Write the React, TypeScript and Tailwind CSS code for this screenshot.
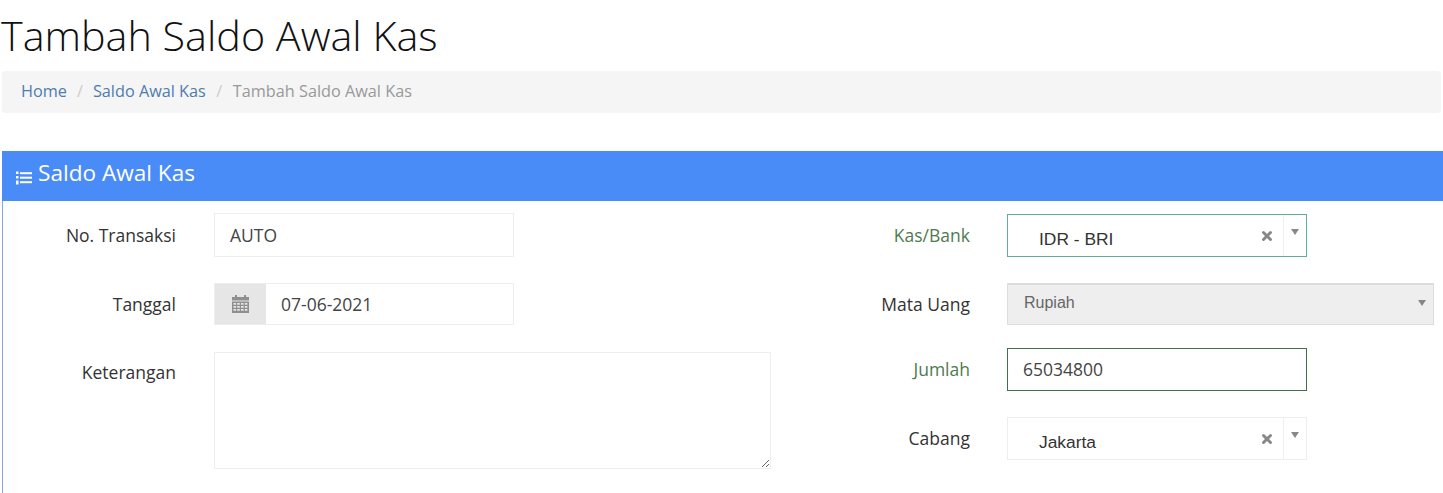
import { X } from "lucide-react";

function ListIcon() {
  return (
    <svg width="16" height="14" viewBox="0 0 16 14" className="mt-[9px] shrink-0" fill="currentColor">
      <rect x="0" y="0.5" width="2.5" height="2.5" />
      <rect x="0" y="5" width="2.5" height="2.5" />
      <rect x="0" y="9.5" width="2.5" height="2.5" />
      <rect x="0" y="12" width="2.5" height="1.5" />
      <rect x="4" y="1.2" width="12" height="2" />
      <rect x="4" y="5.7" width="12" height="2" />
      <rect x="4" y="10.2" width="12" height="2" />
    </svg>
  );
}

function CalendarIcon() {
  return (
    <svg width="17" height="18" viewBox="0 0 17 18" fill="#8f8f8f">
      <rect x="3" y="0" width="2" height="3" />
      <rect x="12" y="0" width="2" height="3" />
      <rect x="0" y="2" width="17" height="3.5" />
      <path d="M0 6.5h17V18H0z M1.5 8v1.8h2.6V8z M5.2 8v1.8h2.6V8z M9 8v1.8h2.6V8z M12.8 8v1.8h2.6V8z M1.5 11v1.8h2.6V11z M5.2 11v1.8h2.6V11z M9 11v1.8h2.6V11z M12.8 11v1.8h2.6V11z M1.5 14v1.8h2.6V14z M5.2 14v1.8h2.6V14z M9 14v1.8h2.6V14z M12.8 14v1.8h2.6V14z" fillRule="evenodd" />
    </svg>
  );
}

function Caret() {
  return <span className="block h-0 w-0 border-x-[4px] border-t-[6px] border-x-transparent border-t-[#888888]" />;
}

function Select2({ value, focused }: { value: string; focused?: boolean }) {
  return (
    <div className={`flex h-[43px] w-[300px] border ${focused ? "border-[#5fae9c]" : "border-[#eeeeee]"}`}>
      <span className="flex-1 pl-[31px] pt-[12px] font-['Liberation_Sans',sans-serif] text-[17.4px] leading-[24px] text-[#333333]">
        {value}
      </span>
      <span className="flex w-[24px] items-center justify-start pl-[1px]">
        <X size={14} strokeWidth={5} className="text-[#888888]" />
      </span>
      <span className="flex w-[23px] justify-center border-l border-[#eeeeee] pt-[14px]">
        <Caret />
      </span>
    </div>
  );
}

function Label({ children, success }: { children: string; success?: boolean }) {
  return (
    <label className={`text-right text-[17.5px] ${success ? "text-[#4f7a4f]" : "text-[#333333]"}`}>{children}</label>
  );
}

export default function App() {
  return (
    <div className="flex h-[493px] flex-col overflow-hidden bg-white font-['Open_Sans',sans-serif]">
      <h1 className="pl-[1px] pt-[8px] text-[41.3px] font-light leading-[54px] text-[#111111]">Tambah Saldo Awal Kas</h1>

      <div className="mx-[2px] mt-[9px] flex h-[42px] items-center rounded-sm bg-[#f5f5f5] pb-[2px] pl-[19px] text-[16.25px] text-[#999999]">
        <span className="text-[#4f7cae]">Home</span>
        <span className="mx-[10px] text-[#cccccc]">/</span>
        <span className="text-[#4f7cae]">Saldo Awal Kas</span>
        <span className="mx-[10.5px] text-[#cccccc]">/</span>
        <span>Tambah Saldo Awal Kas</span>
      </div>

      <section className="ml-[2px] mt-[38px] flex-1 border-l border-[#7fa8e0]">
        <div className="-ml-px flex h-[50px] items-center gap-[6px] bg-[#4a8cf7] pb-[6px] pl-[14px] text-[22.6px] text-white">
          <ListIcon />
          Saldo Awal Kas
        </div>

        <div className="flex pt-[12px]">
          <div className="flex w-[857px] flex-col">
            <div className="grid grid-cols-[173px_300px] items-center gap-x-[38px]">
              <Label>No. Transaksi</Label>
              <div className="flex h-[44px] items-center border border-[#eeeeee] px-[15px] text-[17.5px] text-[#444444]">AUTO</div>
            </div>
            <div className="mt-[26px] grid grid-cols-[173px_300px] items-center gap-x-[38px]">
              <Label>Tanggal</Label>
              <div className="flex h-[42px] border border-[#eeeeee] text-[17.5px] text-[#444444]">
                <span className="flex w-[51px] items-center justify-center bg-[#e6e6e6]">
                  <CalendarIcon />
                </span>
                <span className="flex items-center pl-[15px]">07-06-2021</span>
              </div>
            </div>
            <div className="mt-[27px] grid grid-cols-[173px_557px] items-start gap-x-[38px]">
              <div className="pt-[7px] text-right">
                <Label>Keterangan</Label>
              </div>
              <textarea className="h-[117px] border border-[#eeeeee] bg-white" />
            </div>
          </div>

          <div className="flex flex-1 flex-col pt-px">
            <div className="grid grid-cols-[110px_300px] items-center gap-x-[37px]">
              <Label success>Kas/Bank</Label>
              <Select2 value="IDR - BRI" focused />
            </div>
            <div className="mt-[26px] grid grid-cols-[110px_427px] items-center gap-x-[37px]">
              <Label>Mata Uang</Label>
              <div className="flex h-[42px] items-center justify-between border border-t-2 border-[#dddddd] bg-[#eeeeee] pb-[4px] pl-[16px] pr-[7px] font-['Liberation_Sans',sans-serif] text-base text-[#666666]">
                Rupiah
                <Caret />
              </div>
            </div>
            <div className="mt-[23px] grid grid-cols-[110px_300px] items-center gap-x-[37px]">
              <Label success>Jumlah</Label>
              <div className="flex h-[43px] items-center border border-[#3f6f4c] px-[15px] text-[17.5px] text-[#444444]">65034800</div>
            </div>
            <div className="mt-[26px] grid grid-cols-[110px_300px] items-center gap-x-[37px]">
              <Label>Cabang</Label>
              <Select2 value="Jakarta" />
            </div>
          </div>
        </div>
      </section>
    </div>
  );
}
